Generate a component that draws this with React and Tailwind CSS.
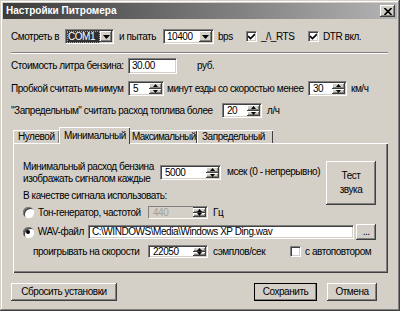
import React from 'react';

const sunken = 'bg-white border border-t-[#808080] border-l-[#808080] border-b-white border-r-white shadow-[inset_1px_1px_0_#404040,inset_-1px_-1px_0_#d4d0c8]';
const raised = 'bg-[#d4d0c8] shadow-[inset_-1px_-1px_0_#404040,inset_1px_1px_0_#ffffff,inset_-2px_-2px_0_#808080]';

const Arrow = ({ up, size = 3 }) => (
  <svg width={size * 2 + 1} height={size + 1} viewBox={`0 0 ${size * 2 + 1} ${size + 1}`}>
    <polygon
      points={up ? `0,${size + 1} ${size * 2 + 1},${size + 1} ${size + 0.5},0` : `0,0 ${size * 2 + 1},0 ${size + 0.5},${size + 1}`}
      fill="#000"
    />
  </svg>
);

const Spin = ({ value, w, h = 15, disabled }) => (
  <div className={`${sunken} flex items-stretch ${w} ${h === 15 ? 'h-[15px]' : 'h-[13px]'}`}>
    <div className={`flex-1 pl-[4px] flex items-center ${disabled ? 'text-[#a0a0a0] bg-[#d4d0c8]' : ''}`}>{value}</div>
    <div className="w-[13px] flex flex-col mr-[1px] my-[1px]">
      <div className={`${raised} flex-1 flex items-center justify-center`}><Arrow up size={2} /></div>
      <div className={`${raised} flex-1 flex items-center justify-center`}><Arrow size={2} /></div>
    </div>
  </div>
);

const Combo = ({ value, w, selected }) => (
  <div className={`${sunken} flex items-stretch h-[15px] ${w}`}>
    <div className="flex-1 flex items-center pl-[1px]">
      <span className={selected ? 'bg-[#303030] text-white pl-[1px] pr-[5px] outline outline-1 outline-dotted outline-[#aaa] -outline-offset-1' : 'pl-[2px]'}>{value}</span>
    </div>
    <div className={`${raised} w-[13px] my-[1px] mr-[1px] flex items-center justify-center`}><Arrow size={3} /></div>
  </div>
);

const Check = ({ checked }) => (
  <div className={`${sunken} w-[11px] h-[11px] flex items-center justify-center`}>
    {checked && (
      <svg width="7" height="7" viewBox="0 0 7 7">
        <path d="M0 3 L2.5 5.5 L7 1" stroke="#000" strokeWidth="1.6" fill="none" />
      </svg>
    )}
  </div>
);

const Radio = ({ checked }) => (
  <div className="w-[11px] h-[11px] rounded-full bg-white shadow-[inset_1px_1px_0_#808080,inset_-1px_-1px_0_#ffffff,inset_2px_2px_0_#404040] flex items-center justify-center">
    {checked && <div className="w-[4px] h-[4px] rounded-full bg-black" />}
  </div>
);

const Button = ({ children, className }) => (
  <div className={`${raised} flex items-center justify-center text-center ${className}`}>{children}</div>
);

export default function App() {
  return (
    <div className="w-[400px] h-[311px] bg-[#d4d0c8] text-[10px] leading-[12px] tracking-[-0.45px] whitespace-nowrap text-black font-['Liberation_Sans',sans-serif] shadow-[inset_-1px_-1px_0_#404040,inset_1px_1px_0_#d4d0c8,inset_-2px_-2px_0_#808080,inset_2px_2px_0_#ffffff] pt-[3px] px-[3px] overflow-hidden">
      {/* Заголовок */}
      <div className="h-[16px] bg-gradient-to-r from-[#3c3c3c] to-[#b4b4b4] flex items-center justify-between pl-[3px] pr-[2px]">
        <span className="text-white font-bold text-[10px] tracking-[0px]">Настройки Питромера</span>
        <Button className="w-[15px] h-[12px]">
          <svg width="8" height="7" viewBox="0 0 8 7">
            <path d="M0.5 0 L7.5 7 M7.5 0 L0.5 7" stroke="#000" strokeWidth="1.6" />
          </svg>
        </Button>
      </div>

      <div className="pl-[8px] pr-[9px]">
        {/* Порт */}
        <div className="mt-[10px] flex items-center h-[15px]">
          <span className="w-[54px]">Смотреть в</span>
          <Combo value="COM1" w="w-[49px]" selected />
          <span className="ml-[5px] w-[44px]">и пытать</span>
          <Combo value="10400" w="w-[51px]" />
          <span className="ml-[4px] w-[28px]">bps</span>
          <Check checked />
          <span className="ml-[4px] w-[47px]">_/\_RTS</span>
          <Check checked />
          <span className="ml-[4px]">DTR вкл.</span>
        </div>

        <div className="mt-[8px] h-[2px] border-t border-t-[#808080] border-b border-b-white" />

        {/* Параметры */}
        <div className="mt-[4px] flex items-center h-[16px]">
          <span className="w-[117px]">Стоимость литра бензина:</span>
          <div className={`${sunken} w-[49px] h-[16px] pl-[3px] flex items-center`}>30.00</div>
          <span className="ml-[20px]">руб.</span>
        </div>

        <div className="mt-[7px] flex items-center h-[15px]">
          <span className="w-[117px]">Пробкой считать минимум</span>
          <Spin value="5" w="w-[36px]" />
          <span className="ml-[3px] w-[141px]">минут езды со скоростью менее</span>
          <Spin value="30" w="w-[39px]" />
          <span className="ml-[4px]">км/ч</span>
        </div>

        <div className="mt-[7px] flex items-center h-[15px]">
          <span className="w-[211px]">"Запредельным" считать расход топлива более</span>
          <Spin value="20" w="w-[40px]" />
          <span className="ml-[5px]">л/ч</span>
        </div>

        {/* Вкладки */}
        <div className="mt-[8px] ml-[2px] flex items-end h-[17px]">
          <div className="w-[46px] h-[13px] pl-[4px] flex items-center border-t border-l border-white shadow-[inset_-1px_0_0_#808080]">Нулевой</div>
          <div className="w-[71px] h-[17px] pl-[4px] flex items-center border-t border-l border-white shadow-[inset_-1px_0_0_#404040] -mb-[1px] bg-[#d4d0c8] relative z-10">Минимальный</div>
          <div className="w-[67px] h-[13px] pl-[2px] flex items-center border-t border-white shadow-[inset_-1px_0_0_#404040] tracking-[-0.6px]">Максимальный</div>
          <div className="w-[76px] h-[13px] pl-[4px] flex items-center border-t border-l border-white shadow-[inset_-1px_0_0_#404040]">Запредельный</div>
        </div>

        <div className="ml-[2px] h-[130px] border-t border-l border-white shadow-[inset_-1px_-1px_0_#404040,inset_-2px_-2px_0_#808080] pl-[9px] pr-[12px] pt-[16px]">
          <div className="flex items-start h-[44px]">
            <div className="mt-[1px] w-[137px]">
              <div>Минимальный расход бензина</div>
              <div>изображать сигналом каждые</div>
            </div>
            <div className="mt-[5px]"><Spin value="5000" w="w-[61px]" /></div>
            <span className="ml-[6px] mt-[6px]">мсек (0 - непрерывно)</span>
            <Button className="ml-auto mt-[1px] w-[50px] h-[44px] leading-[14px]">Тест<br />звука</Button>
          </div>

          <div className="-mt-[14px]">В качестве сигнала использовать:</div>

          <div className="mt-[4px] flex items-center h-[13px]">
            <Radio />
            <span className="ml-[4px] w-[110px]">Тон-генератор, частотой</span>
            <Spin value="440" w="w-[60px]" h={13} disabled />
            <span className="ml-[5px]">Гц</span>
          </div>

          <div className="mt-[5px] flex items-center h-[16px]">
            <Radio checked />
            <span className="ml-[4px] w-[51px]">WAV-файл</span>
            <div className={`${sunken} w-[271px] h-[14px] pl-[3px] flex items-center`}>C:\WINDOWS\Media\Windows XP Ding.wav</div>
            <Button className="ml-[2px] w-[20px] h-[16px]">...</Button>
          </div>

          <div className="mt-[5px] flex items-center h-[13px]">
            <span className="ml-[10px] w-[115px]">проигрывать на скорости</span>
            <Spin value="22050" w="w-[60px]" h={13} />
            <span className="ml-[5px] w-[77px]">сэмплов/сек</span>
            <Check />
            <span className="ml-[4px]">с автоповтором</span>
          </div>
        </div>

        {/* Кнопки */}
        <div className="mt-[10px] flex items-center h-[18px]">
          <Button className="w-[106px] h-[18px]">Сбросить установки</Button>
          <Button className="ml-auto w-[63px] h-[18px] outline outline-1 outline-black -outline-offset-1">Сохранить</Button>
          <Button className="ml-[10px] mr-[11px] w-[50px] h-[18px]">Отмена</Button>
        </div>
      </div>
    </div>
  );
}
